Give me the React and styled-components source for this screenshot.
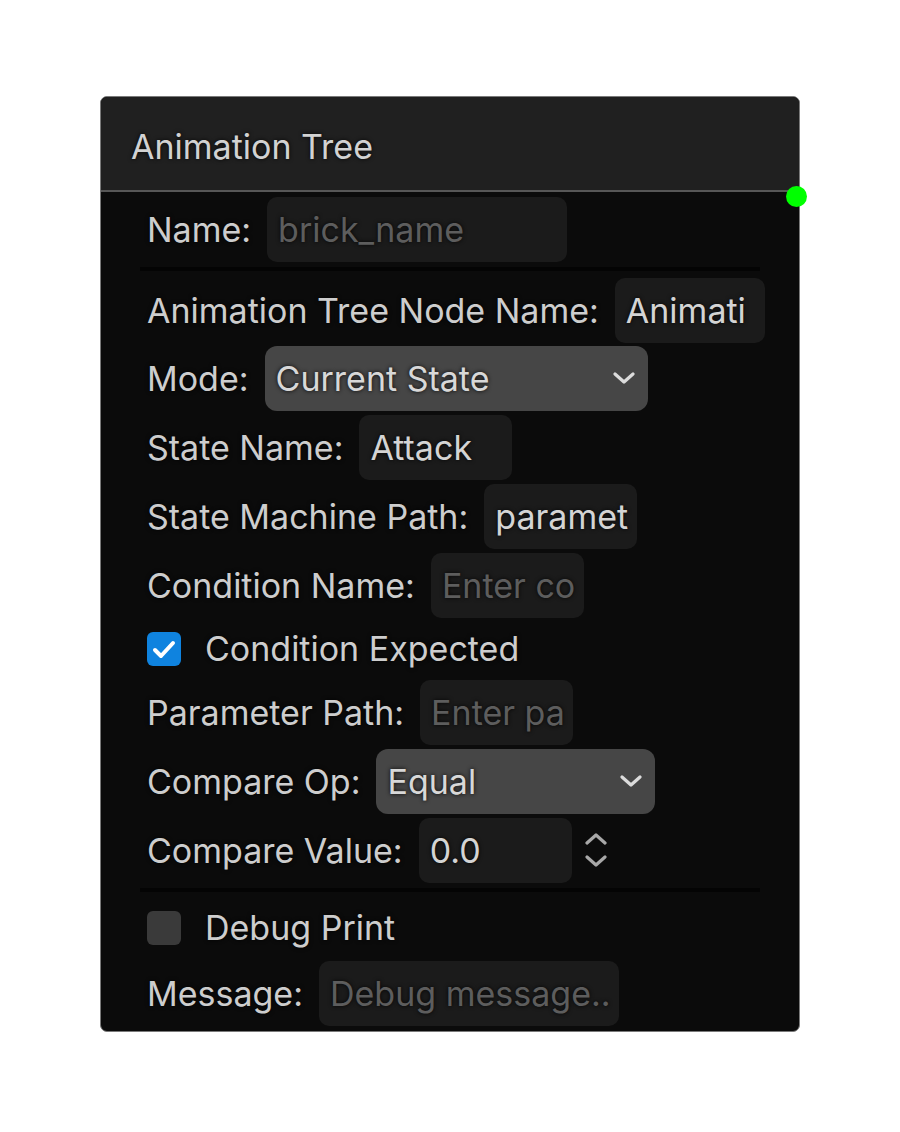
import React from 'react';
import styled, { createGlobalStyle } from 'styled-components';

const GlobalStyle = createGlobalStyle`
  body {
    margin: 0;
    background: #ffffff;
    font-family: Inter, "Noto Sans", sans-serif;
  }
`;

const Page = styled.div`
  padding: 96px 0 0 100px;
`;

const Node = styled.div`
  position: relative;
  box-sizing: border-box;
  width: 700px;
  background: #0b0b0b;
  border: 1px solid #7a7a7a;
  border-radius: 7px;
  color: #cdcdcd;
  text-shadow: 0 0 4px rgba(0, 0, 0, 0.9);
`;

const Header = styled.div`
  display: flex;
  align-items: center;
  height: 95px;
  padding: 5px 0 0 30px;
  box-sizing: border-box;
  background: #202020;
  border-bottom: 2px solid #575757;
  border-radius: 6px 6px 0 0;
  font-size: 34px;
  color: #d2d2d2;
`;

const Port = styled.div`
  position: absolute;
  top: 89px;
  right: -8px;
  width: 21px;
  height: 21px;
  border-radius: 50%;
  background: #00ff00;
`;

const Body = styled.div`
  display: flex;
  flex-direction: column;
  gap: 3.75px;
  padding: 5px 34px 5px 39px;
`;

const Row = styled.div`
  display: flex;
  align-items: center;
  gap: 16px;
  min-height: ${(p) => p.$h || 65}px;
  padding-left: 7px;
  white-space: nowrap;
`;

const Label = styled.span`
  font-size: 34px;
`;

const Divider = styled.div`
  height: 4px;
  margin: 1.5px 5px 2.5px 0;
  background: #040404;
`;

const Field = styled.div`
  box-sizing: border-box;
  display: flex;
  align-items: center;
  width: ${(p) => p.$w}px;
  height: 65px;
  padding: 0 11px;
  overflow: hidden;
  border-radius: 10px;
  background: #1b1b1b;
  font-size: 34px;
  color: ${(p) => (p.$placeholder ? '#5d5d5d' : '#d4d4d4')};
`;

const Select = styled.div`
  box-sizing: border-box;
  display: flex;
  align-items: center;
  justify-content: space-between;
  width: ${(p) => p.$w}px;
  height: 65px;
  padding: 0 12px 0 11px;
  border-radius: 12px;
  background: #464646;
  font-size: 34px;
  color: #d8d8d8;
`;

const Box = styled.div`
  display: flex;
  align-items: center;
  justify-content: center;
  width: 34px;
  height: 34px;
  border-radius: 6px;
  background: ${(p) => (p.$checked ? '#0f83df' : '#3a3a3a')};
`;

const CheckRow = styled(Row)`
  gap: 24px;
`;

const Spinner = styled.div`
  display: flex;
  flex-direction: column;
  gap: 10px;
  margin-left: -4px;
`;

const Chevron = ({ up, color = '#dcdcdc', w = 24, h = 13 }) => (
  <svg width={w} height={h} viewBox="0 0 24 13" fill="none">
    <path
      d={up ? 'M3 11 L12 3 L21 11' : 'M3 2 L12 10 L21 2'}
      stroke={color}
      strokeWidth="3.2"
      strokeLinecap="round"
      strokeLinejoin="round"
    />
  </svg>
);

const Check = () => (
  <svg width="24" height="20" viewBox="0 0 24 20" fill="none">
    <path d="M3 11 L9 17 L21 4" stroke="#fff" strokeWidth="4" strokeLinecap="round" strokeLinejoin="round" />
  </svg>
);

const TextRow = ({ label, w = 153, value, placeholder }) => (
  <Row>
    <Label>{label}</Label>
    <Field $w={w} $placeholder={!value}>{value || placeholder}</Field>
  </Row>
);

const SelectRow = ({ label, w, value }) => (
  <Row>
    <Label>{label}</Label>
    <Select $w={w}>
      {value}
      <Chevron />
    </Select>
  </Row>
);

const CheckboxRow = ({ label, checked, h = 55 }) => (
  <CheckRow $h={h}>
    <Box $checked={checked}>{checked && <Check />}</Box>
    <Label>{label}</Label>
  </CheckRow>
);

export default function App() {
  return (
    <Page>
      <GlobalStyle />
      <Node>
        <Header>Animation Tree</Header>
        <Port />
        <Body>
          <TextRow label="Name:" w={300} placeholder="brick_name" />
          <Divider />
          <TextRow label="Animation Tree Node Name:" value="Animati" />
          <SelectRow label="Mode:" w={383} value="Current State" />
          <TextRow label="State Name:" value="Attack" />
          <TextRow label="State Machine Path:" value="paramet" />
          <TextRow label="Condition Name:" placeholder="Enter co" />
          <CheckboxRow label="Condition Expected" checked />
          <TextRow label="Parameter Path:" placeholder="Enter pa" />
          <SelectRow label="Compare Op:" w={279} value="Equal" />
          <Row>
            <Label>Compare Value:</Label>
            <Field $w={153}>0.0</Field>
            <Spinner>
              <Chevron up color="#a8a8a8" />
              <Chevron color="#a8a8a8" />
            </Spinner>
          </Row>
          <Divider />
          <CheckboxRow label="Debug Print" h={59} />
          <TextRow label="Message:" w={300} placeholder="Debug message.." />
        </Body>
      </Node>
    </Page>
  );
}
